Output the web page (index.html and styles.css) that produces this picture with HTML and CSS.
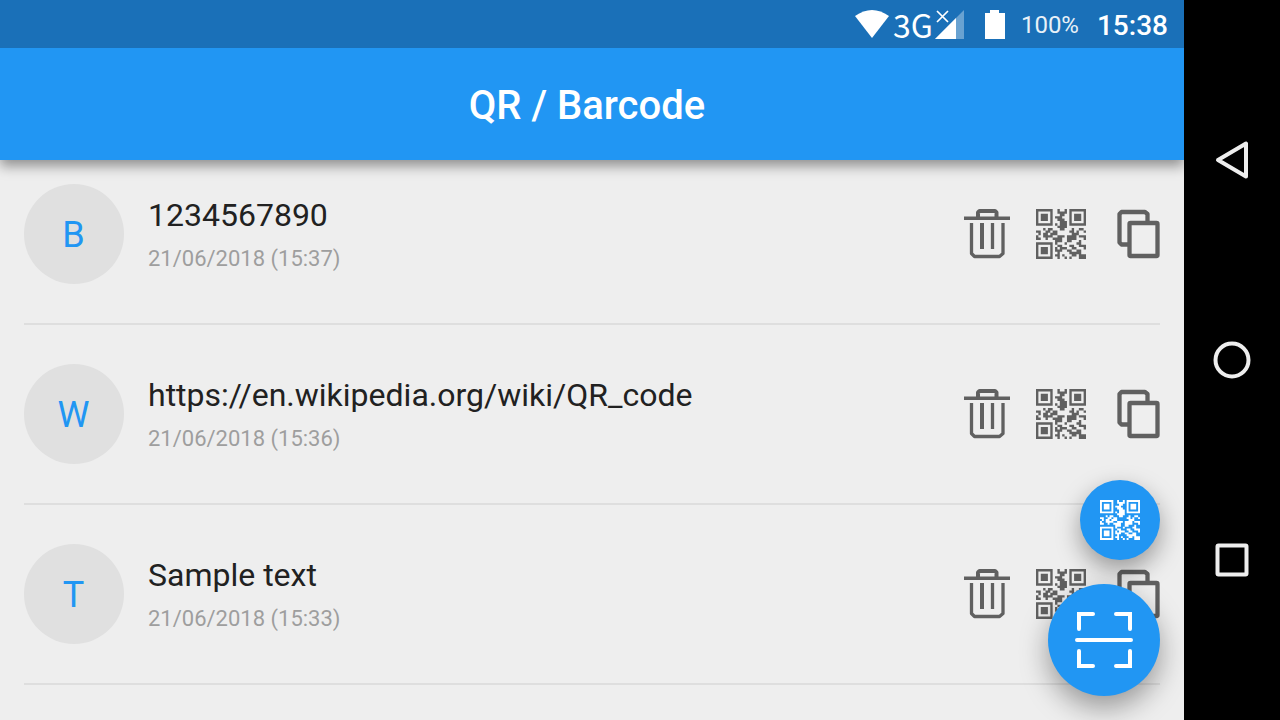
FILE: index.html
```html
<!DOCTYPE html>
<html lang="en">
<head>
<meta charset="utf-8">
<meta name="viewport" content="width=device-width, initial-scale=1">
<title>QR / Barcode</title>
<link rel="stylesheet" href="styles.css">
</head>
<body>
<svg class="sprite" aria-hidden="true">
  <symbol id="qr" viewBox="0 0 21 21">
    <path fill-rule="evenodd" d="M0 0h7v7h-7zM1 1v5h5v-5zM2 2h3v3h-3zM14 0h7v7h-7zM15 1v5h5v-5zM16 2h3v3h-3zM0 14h7v7h-7zM1 15v5h5v-5zM2 16h3v3h-3z"/>
    <path d="M9 0h1v1h-1zM12 0h1v1h-1zM9 1h2v1h-2zM11 1h2v1h-2zM10 2h2v1h-2zM8 3h3v1h-3zM9 4h3v1h-3zM10 5h3v1h-3zM8 6h1v1h-1zM10 6h3v1h-3zM9 7h4v1h-4zM3 8h1v1h-1zM5 8h2v1h-2zM10 8h2v1h-2zM15 8h1v1h-1zM18 8h2v1h-2zM0 9h2v1h-2zM4 9h2v1h-2zM7 9h2v1h-2zM14 9h2v1h-2zM17 9h1v1h-1zM20 9h1v1h-1zM1 10h1v1h-1zM3 10h2v1h-2zM6 10h3v1h-3zM15 10h3v1h-3zM0 11h1v1h-1zM3 11h4v1h-4zM9 11h3v1h-3zM13 11h4v1h-4zM18 11h3v1h-3zM0 12h2v1h-2zM4 12h1v1h-1zM7 12h4v1h-4zM13 12h4v1h-4zM20 12h1v1h-1zM8 13h3v1h-3zM13 13h2v1h-2zM18 13h1v1h-1zM8 14h1v1h-1zM12 14h1v1h-1zM17 14h2v1h-2zM9 15h2v1h-2zM14 15h2v1h-2zM18 15h3v1h-3zM8 16h1v1h-1zM10 16h3v1h-3zM15 16h2v1h-2zM20 16h1v1h-1zM8 17h3v1h-3zM13 17h2v1h-2zM17 17h2v1h-2zM9 18h1v1h-1zM14 18h5v1h-5zM8 19h2v1h-2zM11 19h1v1h-1zM15 19h2v1h-2zM18 19h3v1h-3zM9 20h1v1h-1zM12 20h1v1h-1zM14 20h1v1h-1zM18 20h3v1h-3z"/>
  </symbol>
  <symbol id="trash" viewBox="0 0 46 50">
    <g fill="none" stroke="currentColor">
      <path stroke-width="3.600" d="M0 9.200h46"/>
      <path stroke-width="4" stroke-linejoin="round" d="M14 9V3.500L15.500 2H31l1.500 1.500V9"/>
      <path stroke-width="3.300" stroke-linejoin="round" d="M7.500 14v30.500l3 3h25l3.500-3V14"/>
      <path stroke-width="4" d="M18 14v26"/>
      <path stroke-width="3.300" d="M28.500 14v26"/>
    </g>
  </symbol>
  <symbol id="copy" viewBox="0 0 43 50">
    <g fill="none" stroke="currentColor" stroke-width="4.300" stroke-linejoin="round">
      <path d="M11 35.500H4.500L2.500 33.500V5L4.500 3H28l2.500 2V12"/>
      <rect x="12.500" y="14" width="28" height="33" rx="1"/>
    </g>
  </symbol>
</svg>

<div class="device">
  <div class="screen">
    <div class="status">
      <svg class="wifi" viewBox="0 0 34 28" role="img" aria-label="Wi-Fi"><path fill="#fff" d="M0 6Q17-6 34 6L17 28z"/></svg>
      <span class="net">3G</span>
      <svg class="signal" viewBox="0 0 29 29" role="img" aria-label="Signal"><path fill="#fff" fill-opacity=".35" d="M29 0v29H0z"/><path fill="#fff" d="M21 8v21H0z"/><path fill="none" stroke="#1a70b8" stroke-width="5" d="M2 2l11 11"/><path fill="none" stroke="#fff" stroke-width="1.700" d="M2 1l11 11M13 1L2 12"/></svg>
      <svg class="battery" viewBox="0 0 20 29" role="img" aria-label="Battery"><path fill="#fff" d="M5 0h9v3h6v26H0V3h5z"/></svg>
      <span class="percent">100%</span>
      <span class="clock">15:38</span>
    </div>
    <header class="bar"><h1>QR / Barcode</h1></header>
    <main>
      <ul class="list">
        <li class="item">
          <span class="avatar">B</span>
          <div class="text"><div class="title">1234567890</div><div class="date">21/06/2018 (15:37)</div></div>
          <div class="actions">
            <button aria-label="Delete"><svg class="i-trash"><use href="#trash"/></svg></button>
            <button aria-label="Show QR code"><svg class="i-qr"><use href="#qr"/></svg></button>
            <button aria-label="Copy"><svg class="i-copy"><use href="#copy"/></svg></button>
          </div>
        </li>
        <li class="item">
          <span class="avatar">W</span>
          <div class="text"><div class="title">https://en.wikipedia.org/wiki/QR_code</div><div class="date">21/06/2018 (15:36)</div></div>
          <div class="actions">
            <button aria-label="Delete"><svg class="i-trash"><use href="#trash"/></svg></button>
            <button aria-label="Show QR code"><svg class="i-qr"><use href="#qr"/></svg></button>
            <button aria-label="Copy"><svg class="i-copy"><use href="#copy"/></svg></button>
          </div>
        </li>
        <li class="item">
          <span class="avatar">T</span>
          <div class="text"><div class="title">Sample text</div><div class="date">21/06/2018 (15:33)</div></div>
          <div class="actions">
            <button aria-label="Delete"><svg class="i-trash"><use href="#trash"/></svg></button>
            <button aria-label="Show QR code"><svg class="i-qr"><use href="#qr"/></svg></button>
            <button aria-label="Copy"><svg class="i-copy"><use href="#copy"/></svg></button>
          </div>
        </li>
      </ul>
    </main>
    <div class="fabs">
      <button class="fab small" aria-label="Create QR code"><svg><use href="#qr"/></svg></button>
      <button class="fab" aria-label="Scan">
        <svg viewBox="0 0 60 56"><g fill="none" stroke="#fff" stroke-width="4" stroke-linecap="round"><path d="M5 17V2h14M42 2h14v15M5 39v15h14M42 54h14V39M3 28h54"/></g></svg>
      </button>
    </div>
  </div>
  <nav class="nav" aria-label="System">
    <button aria-label="Back"><svg viewBox="0 0 40 40"><path d="M34 3.500v33L6 20z"/></svg></button>
    <button aria-label="Home"><svg viewBox="0 0 40 40"><circle cx="20" cy="20" r="16.500"/></svg></button>
    <button aria-label="Recents"><svg viewBox="0 0 40 40"><rect x="5.500" y="5.500" width="29" height="29" rx="1"/></svg></button>
  </nav>
</div>
</body>
</html>
```
FILE: styles.css
```css
* { box-sizing: border-box; }
body { margin: 0; font-family: Roboto, "Noto Sans", sans-serif; background: #000; }
button { padding: 0; border: 0; background: none; color: inherit; cursor: pointer; }
svg { display: block; }
.sprite { position: absolute; width: 0; height: 0; }
.device { display: flex; height: 100vh; }
.screen { position: relative; flex: 1; min-width: 0; display: flex; flex-direction: column; background: #eee; overflow: hidden; }
.status { z-index: 1; flex: none; height: 48px; padding-right: 16px; display: flex; align-items: center; justify-content: flex-end; background: #1a70b8; color: #fff; }
.wifi { width: 34px; height: 28px; margin-right: 4px; }
.net { font-family: "Noto Sans CJK JP", sans-serif; font-size: 32px; line-height: 48px; }
.signal { width: 29px; height: 29px; margin-left: 2px; }
.battery { width: 20px; height: 29px; margin: 0 16px 0 21px; }
.percent { font-size: 24px; line-height: 48px; padding-top: 2px; margin-right: 18px; opacity: .9; }
.clock { font-size: 28px; line-height: 48px; padding-top: 4px; font-weight: 500; }
.bar { flex: none; height: 112px; padding: 4px 10px 0 0; display: flex; align-items: center; justify-content: center; background: #2196f3; color: #fff; box-shadow: 0 6px 12px rgba(0, 0, 0, .4); }
.bar h1 { margin: 0; font-size: 40px; line-height: 48px; font-weight: 500; }
.list { list-style: none; margin: 0; padding: 0 24px; }
.item { display: flex; align-items: flex-start; height: 180px; padding-top: 24px; background: linear-gradient(#dedede, #dedede) 0 163px / 100% 2px no-repeat; }
.avatar { flex: none; width: 100px; height: 100px; padding-right: 1px; border-radius: 50%; background: #e0e0e0; color: #2196f3; font-size: 36px; line-height: 102px; text-align: center; }
.text { flex: 1; min-width: 0; padding: 11px 0 0 24px; }
.title { font-size: 32px; line-height: 40px; color: #212121; }
.date { font-size: 22px; line-height: 28px; margin-top: 10px; color: #9e9e9e; }
.actions { display: flex; align-items: center; height: 100px; color: #606060; fill: #606060; }
.i-trash { width: 46px; height: 50px; margin-right: 26px; }
.i-qr { width: 50px; height: 50px; margin-right: 31px; }
.i-copy { width: 43px; height: 50px; }
.fabs { position: absolute; right: 24px; bottom: 24px; display: flex; flex-direction: column; align-items: flex-end; gap: 24px; }
.fab { width: 112px; height: 112px; border-radius: 50%; background: #2196f3; display: flex; align-items: center; justify-content: center; box-shadow: 0 12px 28px rgba(0, 0, 0, .36); }
.fab svg { width: 60px; height: 56px; }
.fab.small { width: 80px; height: 80px; box-shadow: 0 10px 24px rgba(0, 0, 0, .36); }
.fab.small svg { width: 40px; height: 40px; fill: #fff; }
.nav { flex: none; width: 96px; display: flex; flex-direction: column; align-items: center; justify-content: center; gap: 160px; background: #000; }
.nav svg { width: 40px; height: 40px; fill: none; stroke: #eee; stroke-width: 4; stroke-linejoin: round; }
```
